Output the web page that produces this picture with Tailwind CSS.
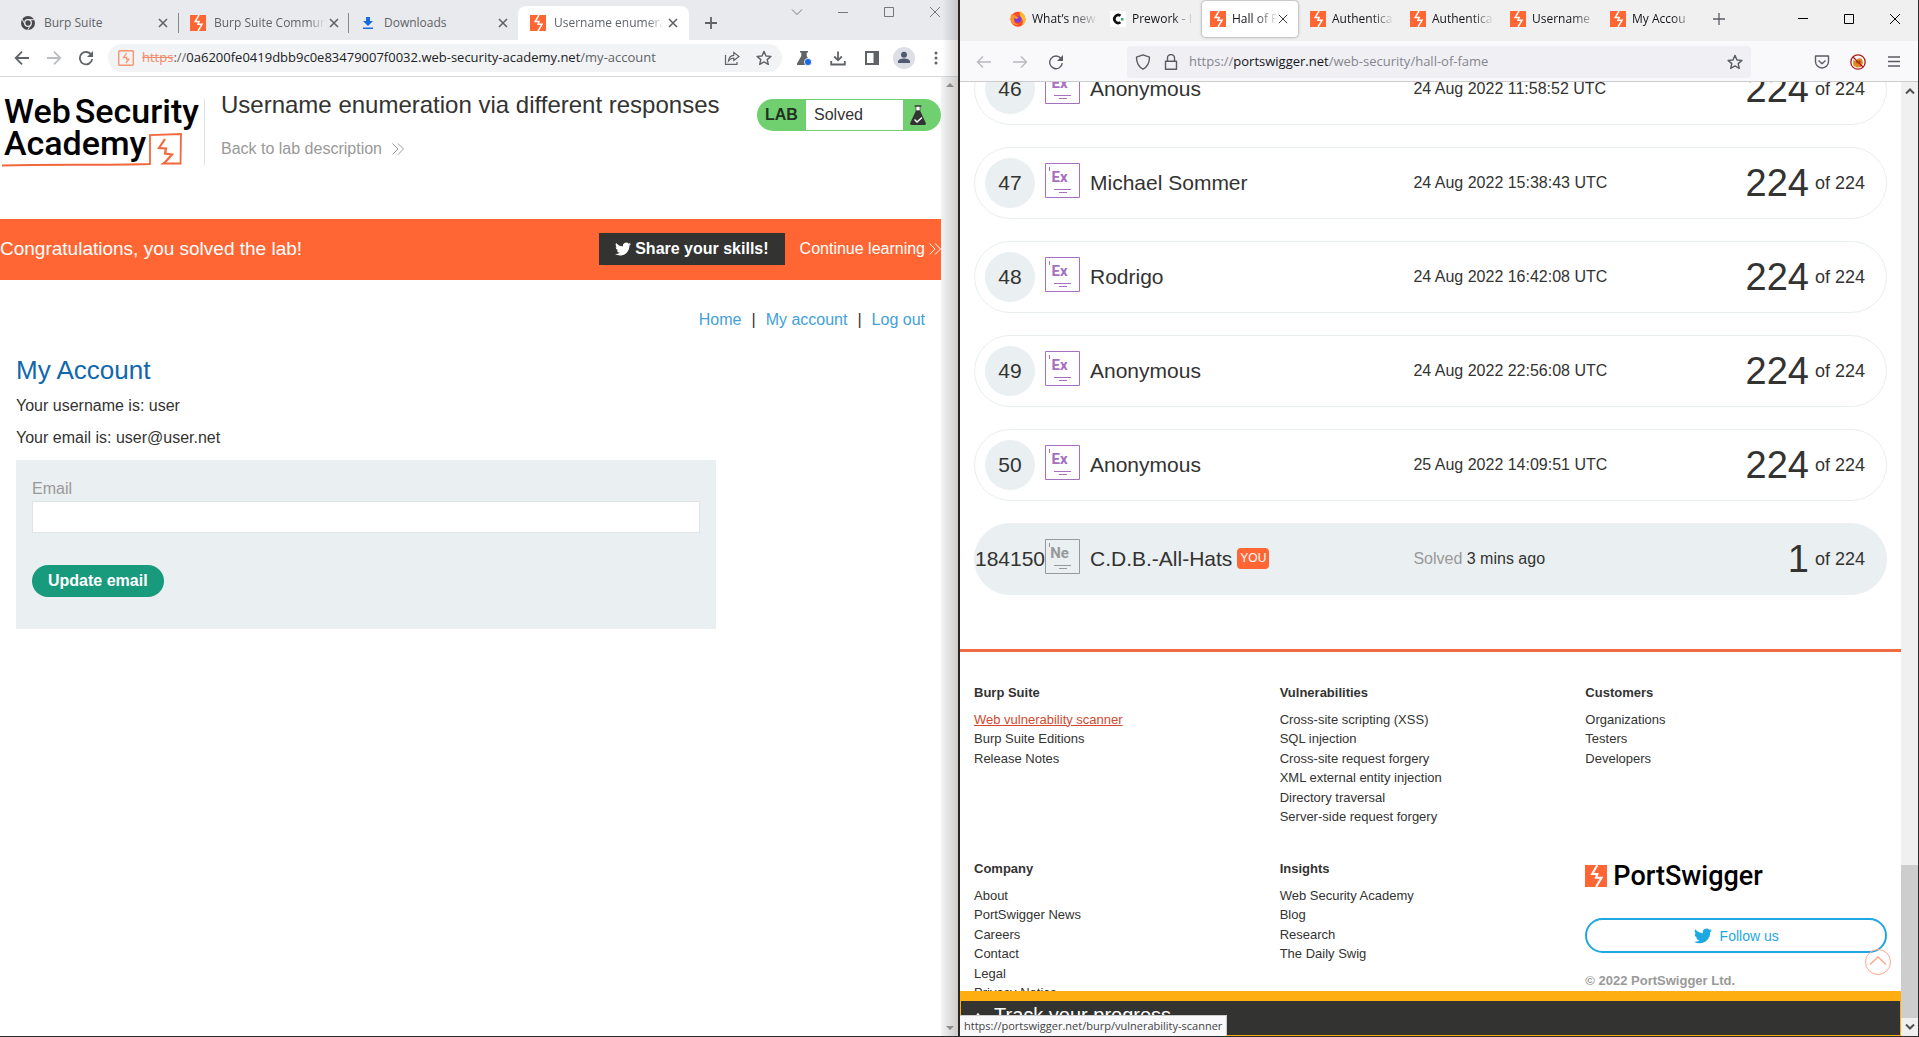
<!DOCTYPE html>
<html lang="en">
<head>
<meta charset="utf-8">
<title>Web Security Academy</title>
<script src="https://cdn.jsdelivr.net/npm/@tailwindcss/browser@4"></script>
</head>
<body class="bg-white font-['Liberation_Sans',Arial,sans-serif] text-[#333332]">
<svg class="hidden" aria-hidden="true">
  <symbol id="burp" viewBox="0 0 16 16"><path fill="#ff6633" d="M0 0h16v16H0z"/><path fill="none" stroke="#fff" stroke-width="1.5" d="M9 0 5.2 6.6H9L8 9.3h4L8 16"/></symbol>
  <symbol id="close" viewBox="0 0 10 10"><path fill="none" stroke="currentColor" stroke-width="1.6" d="M1 1l8 8M9 1 1 9"/></symbol>
  <symbol id="thinclose" viewBox="0 0 12 12"><path fill="none" stroke="currentColor" d="M1 1l10 10M11 1 1 11"/></symbol>
  <symbol id="twitter" viewBox="0 0 24 24"><path fill="currentColor" d="M23.953 4.57a10 10 0 01-2.825.775 4.958 4.958 0 002.163-2.723c-.951.555-2.005.959-3.127 1.184a4.92 4.92 0 00-8.384 4.482C7.69 8.095 4.067 6.13 1.64 3.162a4.822 4.822 0 00-.666 2.475c0 1.71.87 3.213 2.188 4.096a4.904 4.904 0 01-2.228-.616v.06a4.923 4.923 0 003.946 4.827 4.996 4.996 0 01-2.212.085 4.936 4.936 0 004.604 3.417 9.867 9.867 0 01-6.102 2.105c-.39 0-.779-.023-1.17-.067a13.995 13.995 0 007.557 2.209c9.053 0 13.998-7.496 13.998-13.985 0-.21 0-.42-.015-.63A9.935 9.935 0 0024 4.59z"/></symbol>
  <symbol id="chevrons" viewBox="0 0 12 12"><path fill="none" stroke="currentColor" d="M.5.5 6 6 .5 11.5M6 .5 11.5 6 6 11.5"/></symbol>
  <symbol id="star" viewBox="0 0 16 16"><path fill="none" stroke="currentColor" stroke-width="1.4" stroke-linejoin="round" d="M8 1.4 10 6l4.9.4-3.7 3.2 1.1 4.8L8 11.9l-4.3 2.5 1.1-4.8L1.100 6.400 6 6z"/></symbol>
  <symbol id="level" viewBox="0 0 35 35"><path fill="none" stroke="currentColor" d="M.5.5h34v34H.5z"/><path fill="none" stroke="currentColor" d="M4.500 4v4M9 26.500h17M14 29.500h8"/></symbol>
</svg>

<main class="grid h-screen grid-cols-[960fr_959fr] overflow-hidden border-b border-[#2b2b2b]">

  <!-- Chromium window -->
  <section class="relative flex min-w-0 flex-col overflow-hidden border-r-2 border-[#2b2522] bg-white">
    <header class="flex h-10 shrink-0 bg-[#e8eaed] font-['Open_Sans','Noto_Sans',sans-serif] text-xs text-[#5f6368]">
      <div class="mt-1.5 flex w-[179px] items-center gap-2 pr-[11px] pl-5">
        <svg class="size-4" viewBox="0 0 16 16"><circle cx="8" cy="8" r="7" fill="#45484d"/><circle cx="8" cy="8" r="3.300" fill="#45484d" stroke="#e8eaed" stroke-width="1.300"/><path stroke="#e8eaed" fill="none" d="M8 4.700h6.500M5.100 9.600 1.900 4M10.900 9.600 7.700 15"/></svg>
        <span class="flex-1">Burp Suite</span>
        <button aria-label="Close tab"><svg class="size-2.5"><use href="#close"/></svg></button>
      </div>
      <div class="mt-1.5 flex w-[170px] items-center gap-2 pr-[10px] pl-[11px]">
        <div class="-ml-3 h-5 w-px bg-[#85888c]"></div>
        <svg class="ml-[3px] size-4 shrink-0"><use href="#burp"/></svg>
        <span class="-mr-1 min-w-0 flex-1 overflow-hidden whitespace-nowrap [mask-image:linear-gradient(to_right,black_85%,transparent)]">Burp Suite Commun</span>
        <button aria-label="Close tab"><svg class="size-2.5"><use href="#close"/></svg></button>
      </div>
      <div class="mt-1.5 flex w-[169px] items-center gap-2 pr-[10px] pl-[11px]">
        <div class="-ml-3 h-5 w-px bg-[#85888c]"></div>
        <svg class="ml-[3px] size-4" viewBox="0 0 16 16"><path fill="#1a6be0" d="M6 2h4v4h3l-5 5-5-5h3zM3 12.500h10V14H3z"/></svg>
        <span class="flex-1">Downloads</span>
        <button aria-label="Close tab"><svg class="size-2.5"><use href="#close"/></svg></button>
      </div>
      <div class="mt-1.5 flex w-[171px] items-center gap-2 rounded-t-lg bg-white pr-[11px] pl-3">
        <svg class="size-4 shrink-0"><use href="#burp"/></svg>
        <span class="-mr-1 min-w-0 flex-1 overflow-hidden whitespace-nowrap [mask-image:linear-gradient(to_right,black_85%,transparent)]">Username enumera</span>
        <button aria-label="Close tab"><svg class="size-2.5"><use href="#close"/></svg></button>
      </div>
      <button class="mt-1.5 ml-4" aria-label="New tab"><svg class="size-3" viewBox="0 0 12 12"><path stroke="currentColor" stroke-width="1.800" d="M6 0v12M0 6h12"/></svg></button>
      <div class="ml-auto flex h-6 items-center gap-[34px] pr-[17px]">
        <button aria-label="Search tabs"><svg class="size-3" viewBox="0 0 12 12"><path fill="none" stroke="#777" d="M1 3.500l5 5 5-5"/></svg></button>
        <button aria-label="Minimize"><svg class="size-3" viewBox="0 0 12 12"><path stroke="#777" d="M1 6.500h10"/></svg></button>
        <button aria-label="Maximize"><svg class="size-3" viewBox="0 0 12 12"><path fill="none" stroke="#777" d="M1.500 1.500h9v9h-9z"/></svg></button>
        <button class="text-[#777]" aria-label="Close"><svg class="size-3"><use href="#thinclose"/></svg></button>
      </div>
    </header>
    <div class="flex h-[37px] shrink-0 items-center border-b border-[#d5d7da] px-3.5 text-[#5f6368]">
      <button aria-label="Back"><svg class="size-4" viewBox="0 0 16 16"><path fill="none" stroke="currentColor" stroke-width="1.800" d="M15 8H2M8 1.700 1.700 8 8 14.300"/></svg></button>
      <button class="ml-4 text-[#bbbdc0]" aria-label="Forward"><svg class="size-4" viewBox="0 0 16 16"><path fill="none" stroke="currentColor" stroke-width="1.800" d="M1 8h13M8 1.700 14.300 8 8 14.300"/></svg></button>
      <button class="ml-4" aria-label="Reload"><svg class="size-4" viewBox="0 0 16 16"><path fill="none" stroke="currentColor" stroke-width="1.800" d="M13.400 5A6.200 6.200 0 1 0 14.200 9"/><path fill="currentColor" d="M15 1v6H9z"/></svg></button>
      <div class="ml-3.5 flex h-7 min-w-0 flex-1 items-center rounded-full bg-[#f1f3f4] px-2.5">
        <svg class="size-4 shrink-0" viewBox="0 0 16 16"><rect x=".7" y=".7" width="14.600" height="14.600" rx="1" fill="none" stroke="#f5946f" stroke-width="1.400"/><path fill="none" stroke="#f5946f" stroke-width="1.300" d="M8.600 3 5.600 7.500h3v1.600h2.200L8 13"/></svg>
        <div class="ml-2 flex-1 overflow-hidden font-['Open_Sans','Noto_Sans',sans-serif] text-[13px] whitespace-nowrap"><s class="text-[#f08a68]">https</s>://<span class="text-[#202124]">0a6200fe0419dbb9c0e83479007f0032.web-security-academy.net</span>/my-account</div>
        <button aria-label="Share"><svg class="size-4" viewBox="0 0 16 16"><path fill="none" stroke="currentColor" stroke-width="1.200" d="M1.500 5v9.400h11.500V12M4.500 11C4.800 7.500 6.500 5.500 9.800 5.300V2.400L15 6.600l-5.200 4V8C7.500 8 6 9 4.500 11z"/></svg></button>
        <button class="ml-4" aria-label="Bookmark"><svg class="size-4"><use href="#star"/></svg></button>
      </div>
      <button class="ml-3.5" aria-label="Labs"><svg class="size-4" viewBox="0 0 16 16"><path fill="currentColor" d="M4 1h8v1.500h-1.300V6L15 13.500V15H1v-1.500L5.300 6V2.500H4z"/><circle cx="12" cy="12" r="3.600" fill="#1a6be0" stroke="#fff" stroke-width=".8"/></svg></button>
      <button class="ml-[18px]" aria-label="Downloads"><svg class="size-4" viewBox="0 0 16 16"><path fill="none" stroke="currentColor" stroke-width="1.800" d="M8 1.500v8.500M4.200 6.500 8 10.300l3.800-3.800M1.200 11v3.500h13.600V11"/></svg></button>
      <button class="ml-[18px]" aria-label="Side panel"><svg class="size-4" viewBox="0 0 16 16"><path fill="none" stroke="currentColor" stroke-width="2" d="M2 2h12v12H2z"/><path fill="currentColor" d="M9.500 1.500H15v13H9.500z"/></svg></button>
      <button class="ml-[13px]" aria-label="Profile"><svg class="size-[22px]" viewBox="0 0 22 22"><circle cx="11" cy="11" r="11" fill="#dcdfe5"/><circle cx="11" cy="7.800" r="3" fill="#515c73"/><path fill="#515c73" d="M5 16v-1.500c0-2 3-3 6-3s6 1 6 3V16z"/></svg></button>
      <button class="ml-[13px]" aria-label="Menu"><svg class="size-4" viewBox="0 0 16 16"><g fill="currentColor"><circle cx="8" cy="3" r="1.500"/><circle cx="8" cy="8" r="1.500"/><circle cx="8" cy="13" r="1.500"/></g></svg></button>
    </div>

    <div class="flex min-h-0 flex-1">
      <div class="min-w-0 flex-1 overflow-hidden">
        <div class="flex pt-[22px]">
          <a href="#" class="relative mr-4 block h-[66px] w-[205px] shrink-0 border-r border-[#e0e0e0] pl-1 font-['Roboto','Open_Sans',sans-serif] text-[34px] leading-8 font-medium text-black" aria-label="Web Security Academy">
            <span class="-mt-1 flex gap-1"><span>Web</span><span>Security</span></span><span class="block">Academy</span>
            <svg class="absolute top-0 left-0 h-[72px] w-[200px]" viewBox="0 0 200 72" fill="none" stroke="#f2683c" stroke-width="1.800"><path d="M2 66.500C50 65 100 66.500 150 65V36l31-1-.5 29.500H163l1.500-1"/><path stroke-width="2.200" d="M165 40l-6 9 7 .5-1 5 7 1-8 9"/></svg>
          </a>
          <div>
            <h1 class="-mt-2.5 text-2xl leading-8 whitespace-nowrap">Username enumeration via different responses</h1>
            <a href="#" class="mt-4 flex items-center gap-2.5 text-base text-[#999]">Back to lab description <svg class="size-3"><use href="#chevrons"/></svg></a>
          </div>
          <div class="ml-auto flex h-8 w-[184px] items-center rounded-full bg-[#70d070]">
            <strong class="w-[49px] pl-2 text-base text-[#223322]">LAB</strong>
            <div class="flex h-[30px] flex-1 items-center bg-white pl-2">Solved</div>
            <svg class="mr-3.5 ml-1.5 h-5 w-[18px]" viewBox="0 0 18 20"><path fill="#fff" stroke="#333" stroke-width=".6" d="M7 1h4v5H7z"/><path stroke="#333" stroke-width="1.200" d="M5.500 1h7"/><path fill="#333332" d="M7 5.500h4l5.800 12.500c.3 1-.2 2-1.300 2h-13c-1.100 0-1.600-1-1.300-2z"/><path fill="none" stroke="#fff" stroke-width="1.400" d="M5.500 14.500 8 17l5-4.500"/></svg>
          </div>
        </div>
        <div class="mt-[54px] flex h-[61px] items-center bg-[#ff6633] pb-px text-white">
          <p class="text-[19px]">Congratulations, you solved the lab!</p>
          <button class="ml-auto flex h-8 items-center gap-1 bg-[#333332] px-4 font-bold"><svg class="size-4"><use href="#twitter"/></svg>Share your skills!</button>
          <a href="#" class="ml-[15px] flex items-center gap-1">Continue learning <svg class="size-3"><use href="#chevrons"/></svg></a>
        </div>
        <nav class="mt-7 mr-4 flex justify-end gap-2.5 text-[#439fd8]">
          <a href="#">Home</a><span class="text-[#333332]">|</span><a href="#">My account</a><span class="text-[#333332]">|</span><a href="#">Log out</a>
        </nav>
        <div class="px-4">
          <h2 class="mt-[22px] text-[26px] leading-8 text-[#1168ac]">My Account</h2>
          <p class="mt-2">Your username is: user</p>
          <p class="mt-2">Your email is: user@user.net</p>
          <form class="mt-2.5 max-w-[700px] bg-[#eaeff1] px-4 pt-[17px] pb-8" onsubmit="return false">
            <label for="email" class="block text-[#999]">Email</label>
            <input id="email" type="email" class="block h-8 w-full border border-[#e0e3e5] bg-white px-2">
            <button class="mt-8 h-8 rounded-full bg-[#189a7c] px-4 font-bold text-white">Update email</button>
          </form>
        </div>
      </div>
      <div class="flex w-[17px] shrink-0 flex-col items-center justify-between bg-[#f1f1f1] py-1.5">
        <svg class="h-1 w-2" viewBox="0 0 8 4"><path fill="#999" d="M0 4l4-4 4 4z"/></svg>
        <svg class="h-1 w-2" viewBox="0 0 8 4"><path fill="#999" d="M0 0l4 4 4-4z"/></svg>
      </div>
    </div>
    <div class="pointer-events-none absolute inset-y-0 right-0 w-4 bg-linear-to-r from-black/0 to-black/15"></div>
  </section>

  <!-- Firefox window -->
  <section class="relative flex min-w-0 flex-col overflow-hidden border-r border-[#2b2b2b] bg-white">
    <header class="flex h-[41px] shrink-0 bg-[#f0f0f0] pb-1 pl-[42px] font-['Open_Sans','Noto_Sans',sans-serif] text-xs text-[#15141a]">
      <div class="flex w-[100px] items-center gap-1.5 px-2"><svg class="size-4 shrink-0" viewBox="0 0 16 16"><circle cx="8" cy="8.300" r="7.500" fill="#ff4a2e"/><path fill="#ffbd2e" d="M10 0c2 1.500 5.500 4 5.500 8.500 0 3-2 5.500-4.500 6.500 2-2 2.500-5 1-7.500C10.500 5.500 9 4 10 0z"/><path fill="#ff9328" d="M1.500 3C3 3.500 4 4 6 4.500L4 8c-1 3 2 5.500 5 5-3 2-7 .5-8-3-.6-2.500-.5-5 .5-7z"/><circle cx="8" cy="8.500" r="3.300" fill="#7b3fe0"/><path fill="#ff9a2e" d="M4 5.500c2-.5 4 0 4.500 1.500L6 8z"/></svg><span class="-mr-1 min-w-0 flex-1 overflow-hidden whitespace-nowrap [mask-image:linear-gradient(to_right,black_60%,transparent)]">What’s new</span></div>
      <div class="flex w-[100px] items-center gap-1.5 px-2"><span class="flex size-4 shrink-0 items-center justify-center bg-white"><svg class="size-3.5" viewBox="0 0 14 14"><path fill="none" stroke="#111" stroke-width="2.600" d="M9.500 3.800A3.900 3.900 0 1 0 9.500 10.200"/><path fill="#2db36b" d="M10 6h2.500v2.500H10z"/></svg></span><span class="min-w-0 flex-1 overflow-hidden whitespace-nowrap [mask-image:linear-gradient(to_right,black_65%,transparent)]">Prework - I</span></div>
      <div class="mt-px flex w-24 items-center gap-1.5 rounded bg-white px-2 shadow-[0_0_3px_rgba(0,0,0,0.45)]"><svg class="size-4 shrink-0"><use href="#burp"/></svg><span class="min-w-0 flex-1 overflow-hidden whitespace-nowrap [mask-image:linear-gradient(to_right,black_50%,transparent)]">Hall of F</span><button class="-ml-1.5 mr-0.5" aria-label="Close tab"><svg class="size-2.5"><use href="#thinclose"/></svg></button></div>
      <div class="ml-1 flex w-[100px] items-center gap-1.5 px-2"><svg class="size-4 shrink-0"><use href="#burp"/></svg><span class="min-w-0 flex-1 overflow-hidden whitespace-nowrap [mask-image:linear-gradient(to_right,black_65%,transparent)]">Authentica</span></div>
      <div class="flex w-[100px] items-center gap-1.5 px-2"><svg class="size-4 shrink-0"><use href="#burp"/></svg><span class="min-w-0 flex-1 overflow-hidden whitespace-nowrap [mask-image:linear-gradient(to_right,black_65%,transparent)]">Authentica</span></div>
      <div class="flex w-[100px] items-center gap-1.5 px-2"><svg class="size-4 shrink-0"><use href="#burp"/></svg><span class="-mr-1 min-w-0 flex-1 overflow-hidden whitespace-nowrap [mask-image:linear-gradient(to_right,black_60%,transparent)]">Username</span></div>
      <div class="flex w-[100px] items-center gap-1.5 px-2"><svg class="size-4 shrink-0"><use href="#burp"/></svg><span class="min-w-0 flex-1 overflow-hidden whitespace-nowrap [mask-image:linear-gradient(to_right,black_65%,transparent)]">My Accou</span></div>
      <button class="ml-[11px]" aria-label="New tab"><svg class="size-3" viewBox="0 0 12 12"><path stroke="#5b5b66" stroke-width="1.300" d="M6 0v12M0 6h12"/></svg></button>
      <div class="ml-auto flex items-center gap-[34px] pr-[17px] text-black">
        <button aria-label="Minimize"><svg class="size-3" viewBox="0 0 12 12"><path stroke="currentColor" d="M1 5.500h10"/></svg></button>
        <button aria-label="Maximize"><svg class="size-3" viewBox="0 0 12 12"><path fill="none" stroke="currentColor" d="M1.500 1.500h9v9h-9z"/></svg></button>
        <button aria-label="Close"><svg class="size-3"><use href="#thinclose"/></svg></button>
      </div>
    </header>
    <div class="flex h-[41px] shrink-0 items-center border-b border-[#ccc] bg-[#f9f9fb] px-4 pt-0.5 text-[#5b5b66]">
      <button class="text-[#b9b9be]" aria-label="Back"><svg class="size-4" viewBox="0 0 16 16"><path fill="none" stroke="currentColor" stroke-width="1.400" d="M15 8H2M7 2.500 1.500 8 7 13.500"/></svg></button>
      <button class="ml-5 text-[#b9b9be]" aria-label="Forward"><svg class="size-4" viewBox="0 0 16 16"><path fill="none" stroke="currentColor" stroke-width="1.400" d="M1 8h13M9 2.500 14.500 8 9 13.500"/></svg></button>
      <button class="ml-5" aria-label="Reload"><svg class="size-4" viewBox="0 0 16 16"><path fill="none" stroke="currentColor" stroke-width="1.400" d="M13 4.500A6.300 6.300 0 1 0 14.300 9"/><path fill="currentColor" d="M15 1v6H9z"/></svg></button>
      <div class="ml-[63px] flex h-8 min-w-0 flex-1 items-center rounded bg-[#f0f0f4] px-2">
        <svg class="size-4 shrink-0" viewBox="0 0 16 16"><path fill="none" stroke="currentColor" stroke-width="1.400" d="M8 .8l6.500 2.400c0 5.500-2 9.500-6.500 12-4.500-2.500-6.500-6.500-6.500-12z" stroke-linejoin="round"/></svg>
        <svg class="ml-3 size-4 shrink-0" viewBox="0 0 16 16"><path fill="none" stroke="currentColor" stroke-width="1.400" d="M2.500 7.200h11v8h-11zM4.500 7V4a3.500 3.500 0 0 1 7 0v3" stroke-linejoin="round"/></svg>
        <div class="ml-2.5 flex-1 overflow-hidden font-['Open_Sans','Noto_Sans',sans-serif] text-[13px] whitespace-nowrap text-[#85858d]">https://<span class="text-[#15141a]">portswigger.net</span>/web-security/hall-of-fame</div>
        <button aria-label="Bookmark"><svg class="size-4"><use href="#star"/></svg></button>
      </div>
      <button class="ml-[63px]" aria-label="Pocket"><svg class="size-4" viewBox="0 0 16 16"><path fill="none" stroke="currentColor" stroke-width="1.400" stroke-linejoin="round" d="M1.500 2h13v5.500a6.500 6.500 0 0 1-13 0zM4.500 6.500 8 9.800l3.500-3.300"/></svg></button>
      <button class="ml-5" aria-label="Proxy off"><svg class="size-4" viewBox="0 0 16 16"><path fill="#e0861c" d="M3 6l2 1 4-3 3 1 1 4-2 4-4 .5-3.500-2z"/><path fill="#7a4a12" d="M6 7l2 1-1 2zM9 6l2 2-2 1z"/><circle cx="8" cy="8" r="7.200" fill="none" stroke="#b01818" stroke-width="1.300"/><path stroke="#b01818" stroke-width="1.300" d="M3 3l10 10"/></svg></button>
      <button class="ml-5" aria-label="Menu"><svg class="size-4" viewBox="0 0 16 16"><path stroke="currentColor" stroke-width="1.400" d="M2 3h12M2 7.500h12M2 12h12"/></svg></button>
    </div>

    <div class="flex min-h-0 flex-1">
      <div class="flex min-w-0 flex-1 flex-col">
        <div class="relative min-h-0 flex-1 overflow-hidden">
          <ol class="-mt-[29px] flex flex-col gap-[22px] px-3.5 text-[21px] leading-7">
            <li class="flex h-[72px] items-center rounded-[36px] border border-[#e9eeef] pr-[21px] pb-px pl-2.5"><span class="flex size-[50px] items-center justify-center rounded-full bg-[#eaeff1]">46</span><span class="relative mb-1 ml-2.5 flex size-[35px] justify-center pt-1 pr-1.5 font-['Liberation_Sans_Narrow','Roboto',sans-serif] text-[15px] leading-5 font-bold text-[#a66fc0]"><svg class="absolute inset-0 size-[35px]"><use href="#level"/></svg>Ex</span><span class="ml-2.5 flex-1">Anonymous</span><span class="w-[37%] text-base">24 Aug 2022 11:58:52 UTC</span><span class="flex w-[126px] items-center justify-end gap-1.5 text-lg"><span class="text-[38px] leading-9">224</span> of 224</span></li>
            <li class="flex h-[72px] items-center rounded-[36px] border border-[#e9eeef] pr-[21px] pb-px pl-2.5"><span class="flex size-[50px] items-center justify-center rounded-full bg-[#eaeff1]">47</span><span class="relative mb-1 ml-2.5 flex size-[35px] justify-center pt-1 pr-1.5 font-['Liberation_Sans_Narrow','Roboto',sans-serif] text-[15px] leading-5 font-bold text-[#a66fc0]"><svg class="absolute inset-0 size-[35px]"><use href="#level"/></svg>Ex</span><span class="ml-2.5 flex-1">Michael Sommer</span><span class="w-[37%] text-base">24 Aug 2022 15:38:43 UTC</span><span class="flex w-[126px] items-center justify-end gap-1.5 text-lg"><span class="text-[38px] leading-9">224</span> of 224</span></li>
            <li class="flex h-[72px] items-center rounded-[36px] border border-[#e9eeef] pr-[21px] pb-px pl-2.5"><span class="flex size-[50px] items-center justify-center rounded-full bg-[#eaeff1]">48</span><span class="relative mb-1 ml-2.5 flex size-[35px] justify-center pt-1 pr-1.5 font-['Liberation_Sans_Narrow','Roboto',sans-serif] text-[15px] leading-5 font-bold text-[#a66fc0]"><svg class="absolute inset-0 size-[35px]"><use href="#level"/></svg>Ex</span><span class="ml-2.5 flex-1">Rodrigo</span><span class="w-[37%] text-base">24 Aug 2022 16:42:08 UTC</span><span class="flex w-[126px] items-center justify-end gap-1.5 text-lg"><span class="text-[38px] leading-9">224</span> of 224</span></li>
            <li class="flex h-[72px] items-center rounded-[36px] border border-[#e9eeef] pr-[21px] pb-px pl-2.5"><span class="flex size-[50px] items-center justify-center rounded-full bg-[#eaeff1]">49</span><span class="relative mb-1 ml-2.5 flex size-[35px] justify-center pt-1 pr-1.5 font-['Liberation_Sans_Narrow','Roboto',sans-serif] text-[15px] leading-5 font-bold text-[#a66fc0]"><svg class="absolute inset-0 size-[35px]"><use href="#level"/></svg>Ex</span><span class="ml-2.5 flex-1">Anonymous</span><span class="w-[37%] text-base">24 Aug 2022 22:56:08 UTC</span><span class="flex w-[126px] items-center justify-end gap-1.5 text-lg"><span class="text-[38px] leading-9">224</span> of 224</span></li>
            <li class="flex h-[72px] items-center rounded-[36px] border border-[#e9eeef] pr-[21px] pb-px pl-2.5"><span class="flex size-[50px] items-center justify-center rounded-full bg-[#eaeff1]">50</span><span class="relative mb-1 ml-2.5 flex size-[35px] justify-center pt-1 pr-1.5 font-['Liberation_Sans_Narrow','Roboto',sans-serif] text-[15px] leading-5 font-bold text-[#a66fc0]"><svg class="absolute inset-0 size-[35px]"><use href="#level"/></svg>Ex</span><span class="ml-2.5 flex-1">Anonymous</span><span class="w-[37%] text-base">25 Aug 2022 14:09:51 UTC</span><span class="flex w-[126px] items-center justify-end gap-1.5 text-lg"><span class="text-[38px] leading-9">224</span> of 224</span></li>
            <li class="flex h-[72px] items-center rounded-[36px] border border-[#eaeff1] bg-[#eaeff1] pr-[21px] pb-px pl-2.5"><span class="flex size-[50px] items-center justify-center">184150</span><span class="relative mb-1 ml-2.5 flex size-[35px] justify-center pt-1 pr-1.5 font-['Liberation_Sans_Narrow','Roboto',sans-serif] text-[15px] leading-5 font-bold text-[#999]"><svg class="absolute inset-0 size-[35px]"><use href="#level"/></svg>Ne</span><span class="ml-2.5 flex flex-1 items-center gap-[5px]">C.D.B.-All-Hats <span class="rounded-sm bg-[#ff6633] px-[3px] text-xs leading-[21px] text-white">YOU</span></span><span class="w-[37%] text-base"><span class="text-[#999]">Solved</span> 3 mins ago</span><span class="flex w-[126px] items-center justify-end gap-1.5 text-lg"><span class="text-[38px] leading-9">1</span> of 224</span></li>
          </ol>
          <footer class="mt-[54px] grid grid-cols-3 gap-x-1 border-t-[3px] border-[#f06c45] px-3.5 pt-[31px] text-[13px] leading-normal">
            <div class="h-44"><h3 class="font-bold">Burp Suite</h3>
              <ul class="mt-[7px]"><li><a href="#" class="text-[#d1492e] underline">Web vulnerability scanner</a></li><li><a href="#">Burp Suite Editions</a></li><li><a href="#">Release Notes</a></li></ul></div>
            <div class="h-44"><h3 class="font-bold">Vulnerabilities</h3>
              <ul class="mt-[7px]"><li><a href="#">Cross-site scripting (XSS)</a></li><li><a href="#">SQL injection</a></li><li><a href="#">Cross-site request forgery</a></li><li><a href="#">XML external entity injection</a></li><li><a href="#">Directory traversal</a></li><li><a href="#">Server-side request forgery</a></li></ul></div>
            <div class="h-44"><h3 class="font-bold">Customers</h3>
              <ul class="mt-[7px]"><li><a href="#">Organizations</a></li><li><a href="#">Testers</a></li><li><a href="#">Developers</a></li></ul></div>
            <div><h3 class="font-bold">Company</h3>
              <ul class="mt-[7px]"><li><a href="#">About</a></li><li><a href="#">PortSwigger News</a></li><li><a href="#">Careers</a></li><li><a href="#">Contact</a></li><li><a href="#">Legal</a></li><li><a href="#">Privacy Notice</a></li></ul></div>
            <div><h3 class="font-bold">Insights</h3>
              <ul class="mt-[7px]"><li><a href="#">Web Security Academy</a></li><li><a href="#">Blog</a></li><li><a href="#">Research</a></li><li><a href="#">The Daily Swig</a></li></ul></div>
            <div>
              <a href="#" class="mt-1 flex h-[26px] items-center gap-1.5 font-['Roboto','Open_Sans',sans-serif] text-[27px] font-medium text-black"><svg class="size-[22px]"><use href="#burp"/></svg>PortSwigger</a>
              <a href="#" class="mt-[29px] flex h-[35px] items-center justify-center gap-2 rounded-full border-2 border-[#1ea7e1] text-sm text-[#1ea7e1]"><svg class="size-[18px]"><use href="#twitter"/></svg>Follow us</a>
              <p class="mt-[18px] font-bold text-[#999]">© 2022 PortSwigger Ltd.</p>
            </div>
          </footer>
          <a href="#" class="absolute right-2.5 bottom-4" aria-label="Back to top"><svg class="size-[26px]" viewBox="0 0 26 26"><circle cx="13" cy="13" r="12.500" fill="none" stroke="#ffa68c"/><path fill="none" stroke="#ffa68c" stroke-width="1.500" d="M5 15.500 13 8l8 7.500"/></svg></a>
        </div>
        <div class="h-[45px] shrink-0 overflow-hidden border border-t-[10px] border-[#ffae12] bg-[#333332] text-xl leading-7 text-white">
          <div class="flex items-center gap-2 pl-3"><svg class="size-3" viewBox="0 0 12 12"><path fill="none" stroke="currentColor" stroke-width="1.500" d="M1 10l4-5 4 5"/></svg><span class="pl-px">Track your progress</span></div>
        </div>
      </div>
      <div class="flex w-[17px] shrink-0 flex-col items-center bg-[#f0f0f0]">
        <svg class="my-1.5 h-1.5 w-2.5" viewBox="0 0 10 6"><path fill="none" stroke="#505050" stroke-width="2" d="M1 5.500 5 1.500l4 4"/></svg>
        <div class="flex-[766]"></div>
        <div class="w-full flex-[153] bg-[#cdcdcd]"></div>
        <svg class="my-1.5 h-1.5 w-2.5" viewBox="0 0 10 6"><path fill="none" stroke="#505050" stroke-width="2" d="M1 .5l4 4 4-4"/></svg>
      </div>
    </div>
    <div class="absolute bottom-0 left-0 h-[21px] border-t border-r border-[#ccc] bg-[#f9f9fb] pr-1 pl-1 font-['Open_Sans','Noto_Sans',sans-serif] text-[11px] leading-5 text-[#444]">https://portswigger.net/burp/vulnerability-scanner</div>
  </section>
</main>
</body>
</html>
